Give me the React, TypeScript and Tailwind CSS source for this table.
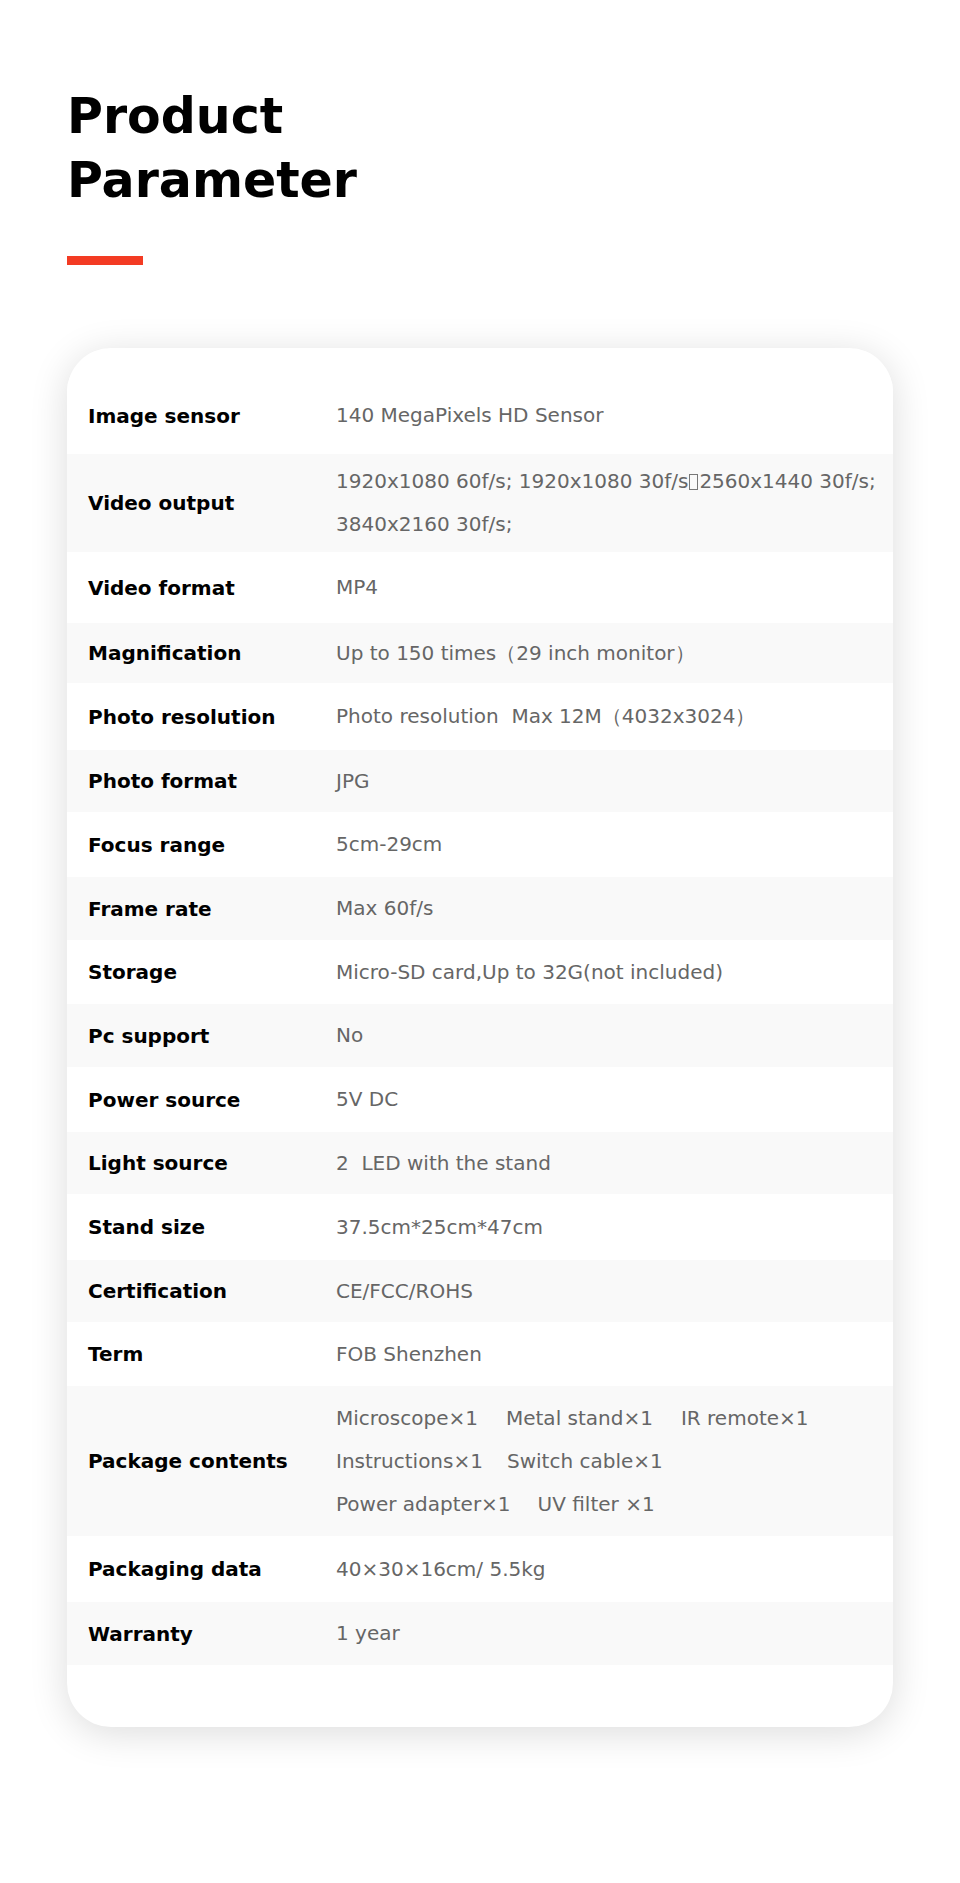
const FONT = "font-['DejaVu_Sans',sans-serif]";

type Row = { label: string; value: React.ReactNode; h: string };

const Tofu = () => (
  <span className="inline-block w-[9px] h-[16px] border border-[#777] align-[-2px] mx-[1px]" />
);

const ROWS: Row[] = [
  { label: "Image sensor", value: "140 MegaPixels HD Sensor", h: "h-[77px]" },
  {
    label: "Video output",
    value: (
      <>
        1920x1080 60f/s; 1920x1080 30f/s
        <Tofu />
        2560x1440 30f/s;
        <br />
        3840x2160 30f/s;
      </>
    ),
    h: "h-[98px]",
  },
  { label: "Video format", value: "MP4", h: "h-[71px]" },
  { label: "Magnification", value: "Up to 150 times（29 inch monitor）", h: "h-[60px]" },
  { label: "Photo resolution", value: "Photo resolution  Max 12M（4032x3024）", h: "h-[67px]" },
  { label: "Photo format", value: "JPG", h: "h-[62px]" },
  { label: "Focus range", value: "5cm-29cm", h: "h-[65px]" },
  { label: "Frame rate", value: "Max 60f/s", h: "h-[63px]" },
  { label: "Storage", value: "Micro-SD card,Up to 32G(not included)", h: "h-[64px]" },
  { label: "Pc support", value: "No", h: "h-[63px]" },
  { label: "Power source", value: "5V DC", h: "h-[65px]" },
  { label: "Light source", value: "2  LED with the stand", h: "h-[62px]" },
  { label: "Stand size", value: "37.5cm*25cm*47cm", h: "h-[66px]" },
  { label: "Certification", value: "CE/FCC/ROHS", h: "h-[62px]" },
  { label: "Term", value: "FOB Shenzhen", h: "h-[64px]" },
  {
    label: "Package contents",
    value: (
      <div className="flex flex-col">
        <div className="flex gap-[28px]">
          <span>Microscope×1</span>
          <span>Metal stand×1</span>
          <span>IR remote×1</span>
        </div>
        <div className="flex gap-[24px]">
          <span>Instructions×1</span>
          <span>Switch cable×1</span>
        </div>
        <div className="flex gap-[27px]">
          <span>Power adapter×1</span>
          <span>UV filter ×1</span>
        </div>
      </div>
    ),
    h: "h-[150px]",
  },
  { label: "Packaging data", value: "40×30×16cm/ 5.5kg", h: "h-[66px]" },
  { label: "Warranty", value: "1 year", h: "h-[63px]" },
];

export default function App() {
  return (
    <div className={`${FONT} bg-white min-h-[1883px] w-full`}>
      <div className="pl-[67px] pt-[85px]">
        <h1 className="text-[49px] leading-[64px] font-bold text-black">
          Product
          <br />
          Parameter
        </h1>
        <div className="mt-[43px] w-[76px] h-[9px] bg-[#f33b23]" />
      </div>

      <div className="mt-[83px] ml-[67px] w-[826px] bg-white rounded-[44px] shadow-[0_6px_38px_rgba(0,0,0,0.14)] overflow-hidden pt-[29px] pb-[62px]">
        {ROWS.map((r, i) => (
          <div
            key={r.label}
            className={`flex items-center ${r.h} ${i % 2 === 1 ? "bg-[#f9f9f9]" : "bg-white"}`}
          >
            <div className="w-[269px] shrink-0 pl-[21px] text-[20px] font-bold text-black">
              {r.label}
            </div>
            <div className="text-[20px] leading-[43px] font-normal text-[#666] whitespace-pre">
              {r.value}
            </div>
          </div>
        ))}
      </div>
    </div>
  );
}
